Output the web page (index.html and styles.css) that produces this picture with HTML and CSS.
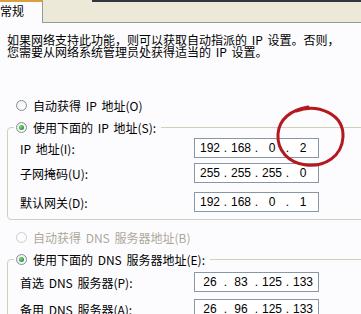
FILE: index.html
```html
<!DOCTYPE html>
<html lang="zh-CN">
<head>
<meta charset="utf-8">
<title>Internet 协议 (TCP/IP) 属性</title>
<link rel="stylesheet" href="styles.css">
</head>
<body>
<div class="tabbar">
  <div class="tab">常规</div>
  <div class="tabrest"><div class="strip"></div></div>
</div>
<div class="page">
  <p class="desc">如果网络支持此功能，则可以获取自动指派的 IP 设置。否则，<br>您需要从网络系统管理员处获得适当的 IP 设置。</p>

  <div class="opt first"><span class="radio"></span><span>自动获得 IP 地址(O)</span></div>

  <fieldset class="group g1">
    <legend><span class="opt"><span class="radio on"></span><span>使用下面的 IP 地址(S):</span></span></legend>
    <div class="row r1"><span class="lbl">IP 地址(I):</span>
      <span class="ip"><span class="seg">192</span><span class="dot">.</span><span class="seg">168</span><span class="dot">.</span><span class="seg">0</span><span class="dot">.</span><span class="seg">2</span></span></div>
    <div class="row r2"><span class="lbl">子网掩码(U):</span>
      <span class="ip"><span class="seg">255</span><span class="dot">.</span><span class="seg">255</span><span class="dot">.</span><span class="seg">255</span><span class="dot">.</span><span class="seg">0</span></span></div>
    <div class="row r3"><span class="lbl">默认网关(D):</span>
      <span class="ip"><span class="seg">192</span><span class="dot">.</span><span class="seg">168</span><span class="dot">.</span><span class="seg">0</span><span class="dot">.</span><span class="seg">1</span></span></div>
  </fieldset>

  <div class="opt disabled"><span class="radio off"></span><span>自动获得 DNS 服务器地址(B)</span></div>

  <fieldset class="group g2">
    <legend><span class="opt"><span class="radio on"></span><span>使用下面的 DNS 服务器地址(E):</span></span></legend>
    <div class="row d1"><span class="lbl">首选 DNS 服务器(P):</span>
      <span class="ip"><span class="seg">26</span><span class="dot">.</span><span class="seg">83</span><span class="dot">.</span><span class="seg">125</span><span class="dot">.</span><span class="seg">133</span></span></div>
    <div class="row d2"><span class="lbl">备用 DNS 服务器(A):</span>
      <span class="ip"><span class="seg">26</span><span class="dot">.</span><span class="seg">96</span><span class="dot">.</span><span class="seg">125</span><span class="dot">.</span><span class="seg">133</span></span></div>
  </fieldset>
</div>
<svg class="mark" width="361" height="314" viewBox="0 0 361 314" aria-hidden="true">
  <path d="M296 111 C318 103 344 114 343 137 C342 157 324 167 306 165 C288 163 277 150 278 134 C279 119 291 110 308 107" fill="none" stroke="#B3191E" stroke-width="3" stroke-linecap="round"/>
</svg>
</body>
</html>
```

FILE: styles.css
```css
html, body {
  margin: 0;
  padding: 0;
}
body {
  width: 361px;
  height: 314px;
  overflow: hidden;
  position: relative;
  background: #FCFCFE;
  font-family: "Noto Sans CJK SC", "Noto Sans", sans-serif;
  font-size: 12px;
  color: #000;
}
.tabbar {
  display: flex;
  height: 23px;
  background: #ECE9D8;
}
.tab {
  width: 43px;
  box-sizing: border-box;
  background: #FCFCFE;
  border-top: 2px solid #D9A040;
  border-right: 1px solid #919B9C;
  height: 23px;
  padding-top: 1px;
  line-height: 16px;
  white-space: nowrap;
}
.tabrest {
  flex: 1;
  border-bottom: 1px solid #919B9C;
}
.strip {
  height: 2px;
  margin-left: 49px;
  background: #2E363E;
}
.page {
  padding-left: 7px;
  word-spacing: 2px;
}
.desc {
  margin: 0;
  padding-top: 11px;
  line-height: 12px;
  white-space: nowrap;
}
.opt {
  display: flex;
  align-items: center;
  height: 16px;
  gap: 6px;
  white-space: nowrap;
}
.opt.first {
  margin-top: 39px;
  padding-left: 9px;
}
.opt.disabled {
  margin-top: 9px;
  padding-left: 9px;
  color: #ACA899;
}
.radio {
  width: 11px;
  height: 11px;
  box-sizing: border-box;
  border-radius: 50%;
  border: 1px solid #7E8E9E;
  background: radial-gradient(circle at 65% 65%, #FFFFFF 0%, #ECEBE6 100%);
  display: flex;
  align-items: center;
  justify-content: center;
  flex: none;
}
.radio.on::after {
  content: "";
  width: 5px;
  height: 5px;
  border-radius: 50%;
  background: radial-gradient(circle at 35% 35%, #7ED47E 0%, #2A9A2A 70%, #1E7E1E 100%);
}
.radio.off {
  border-color: #CFCDC2;
  background: #FCFCFE;
}
.group {
  margin: 6px -30px 0 0;
  padding: 0 0 7px 12px;
  border: 1px solid #D0D0BF;
  border-radius: 4px;
  min-width: 0;
}
.group legend {
  margin-left: -6px;
  padding: 0 5px 0 2px;
  height: 16px;
}
.row {
  display: flex;
  align-items: center;
  height: 20px;
  white-space: nowrap;
}
.lbl {
  width: 174px;
  flex: none;
}
.r1 { margin-top: 3px; }
.r2 { margin-top: 5px; }
.r3 { margin-top: 9px; }
.d1 { margin-top: 5px; }
.d2 { margin-top: 7px; }
.ip {
  width: 125px;
  height: 20px;
  box-sizing: border-box;
  border: 1px solid #8797A8;
  background: #FFFFFF;
  display: flex;
  align-items: center;
  padding-left: 3px;
  font-family: "Liberation Sans", "DejaVu Sans", sans-serif;
  font-size: 12px;
  word-spacing: 0;
  flex: none;
}
.seg {
  width: 24px;
  text-align: center;
}
.dot {
  width: 7px;
  text-align: center;
}
.mark {
  position: absolute;
  left: 0;
  top: 0;
  pointer-events: none;
}
```
